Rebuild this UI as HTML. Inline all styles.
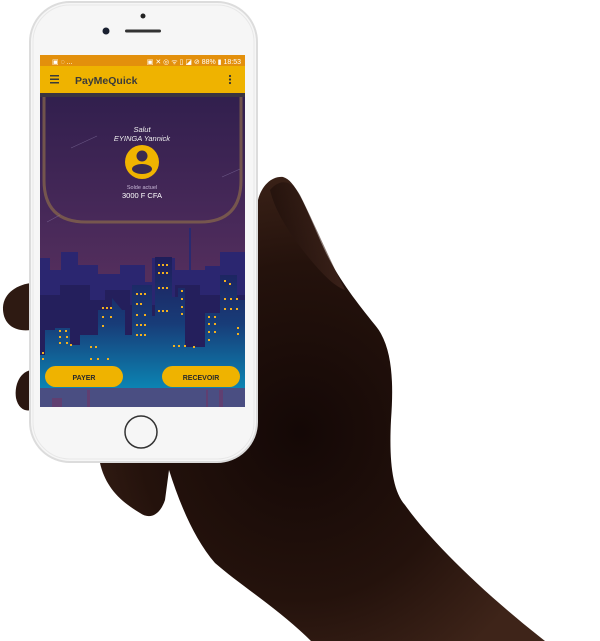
<!DOCTYPE html>
<html><head><meta charset="utf-8"><style>
html,body{margin:0;padding:0;background:#fff;width:600px;height:641px;overflow:hidden}
svg{display:block}
text{font-family:"Liberation Sans",sans-serif}
</style></head><body>
<svg width="600" height="641" viewBox="0 0 600 641" xmlns="http://www.w3.org/2000/svg">
<defs>
<radialGradient id="hand" cx="0.45" cy="0.55" r="0.6">
<stop offset="0" stop-color="#140806"/><stop offset="0.6" stop-color="#24120c"/><stop offset="1" stop-color="#3e2419"/>
</radialGradient>
<linearGradient id="sky" x1="0" y1="0" x2="0" y2="1">
<stop offset="0" stop-color="#2a1c4a"/><stop offset="0.5" stop-color="#4a2a5a"/><stop offset="1" stop-color="#6e3a62"/>
</linearGradient>
<linearGradient id="front" x1="0" y1="0" x2="0" y2="1">
<stop offset="0" stop-color="#1f1d5a"/><stop offset="0.5" stop-color="#183c78"/><stop offset="1" stop-color="#0b86b4"/>
</linearGradient>
<linearGradient id="thumbhi" x1="0" y1="0" x2="1" y2="0">
<stop offset="0" stop-color="#1a0c08"/><stop offset="1" stop-color="#4a2c22"/>
</linearGradient>
</defs>
<!-- hand -->
<path fill="url(#hand)" d="M258 200 C262 185 272 176 283 177 C295 180 305 205 320 240 C335 275 355 300 375 325 C392 345 394 380 391 420 C389 460 392 490 405 505 C430 540 480 590 545 641 L311 641 C280 610 240 585 215 563 C195 540 180 505 169 470 L165 500 C160 515 150 520 140 513 C118 500 105 485 100 463 Z"/>
<path fill="url(#thumbhi)" opacity="0.6" d="M270 190 C280 178 292 180 300 195 C315 225 330 260 345 290 C330 285 310 260 295 240 C285 225 275 210 270 190Z"/>
<path fill="#2e1a12" d="M31 283 C15 285 2 295 3 310 C4 325 15 332 31 330 Z"/>
<path fill="#2a1610" d="M31 370 C20 372 14 385 16 398 C18 408 25 412 31 410 Z"/>
<!-- phone -->
<rect x="30" y="2" width="227" height="460" rx="40" fill="#f6f6f6" stroke="#dcdcdc" stroke-width="2"/>
<rect x="33" y="5" width="221" height="454" rx="37" fill="none" stroke="#e8e8e8" stroke-width="1"/>
<circle cx="143" cy="16" r="2.5" fill="#222"/>
<circle cx="106" cy="31" r="3.5" fill="#1a2030"/>
<rect x="125" y="29.5" width="36" height="3" rx="1.5" fill="#333"/>
<circle cx="141" cy="432" r="16" fill="none" stroke="#333" stroke-width="1.5"/>
<!-- screen -->
<rect x="40" y="55" width="205" height="352" fill="url(#sky)"/>
<rect x="40" y="55" width="205" height="11" fill="#e3900c"/>
<text x="52" y="64" font-size="7" fill="#fff">▣ ◌ ...</text>
<text x="241" y="64" font-size="7" fill="#fff" text-anchor="end">▣ ✕ ◎ ᯤ ▯ ◪ ⊘ 88% ▮ 18:53</text>
<rect x="40" y="66" width="205" height="27" fill="#efb300"/>
<rect x="50" y="75" width="9" height="1.5" fill="#3a3a3a"/><rect x="50" y="78.5" width="9" height="1.5" fill="#3a3a3a"/><rect x="50" y="82" width="9" height="1.5" fill="#3a3a3a"/>
<text x="75" y="84" font-size="10.5" font-weight="bold" fill="#3a3a3a">PayMeQuick</text>
<circle cx="230" cy="76" r="1.1" fill="#333"/><circle cx="230" cy="79.5" r="1.1" fill="#333"/><circle cx="230" cy="83" r="1.1" fill="#333"/>
<rect x="40" y="93" width="205" height="4" fill="#3a3440"/>
<!-- card outline -->
<path d="M44 97 L44 180 Q44 222 86 222 L200 222 Q241 222 241 180 L241 97" fill="none" stroke="#8a6a4a" stroke-width="3" opacity="0.7"/>
<g stroke="#8a7aa8" stroke-width="0.6" opacity="0.6"><line x1="71" y1="148" x2="97" y2="136"/><line x1="222" y1="177" x2="240" y2="169"/><line x1="47" y1="222" x2="60" y2="215"/></g>
<text x="142" y="132" font-size="7.5" font-style="italic" fill="#eee" text-anchor="middle">Salut</text>
<text x="142" y="141" font-size="7.5" font-style="italic" fill="#eee" text-anchor="middle">EYINGA Yannick</text>
<circle cx="142" cy="162" r="17" fill="#f0b400"/>
<circle cx="142" cy="156" r="5.5" fill="#3a2a50"/>
<ellipse cx="142" cy="169" rx="10" ry="5" fill="#3a2a50"/>
<text x="142" y="189" font-size="5.5" fill="#c9b8d8" text-anchor="middle">Solde actuel</text>
<text x="142" y="198" font-size="7.5" fill="#fff" text-anchor="middle">3000 F CFA</text>
<rect x="189" y="228" width="2" height="60" fill="#2a2a70"/>
<!-- back buildings -->
<path fill="#2b2670" d="M40 258 L50 258 L50 270 L61 270 L61 252 L78 252 L78 265 L98 265 L98 274 L120 274 L120 265 L145 265 L145 282 L152 282 L152 258 L175 258 L175 270 L205 270 L205 266 L220 266 L220 252 L245 252 L245 400 L40 400Z"/>
<path fill="#241f5c" d="M40 295 L60 295 L60 285 L90 285 L90 300 L105 300 L105 290 L130 290 L130 305 L175 305 L175 285 L200 285 L200 295 L245 295 L245 400 L40 400Z"/>
<!-- front buildings -->
<path fill="url(#front)" d="M40 355 L45 355 L45 330 L55 330 L55 328 L70 328 L70 345 L80 345 L80 335 L98 335 L98 310 L112 310 L112 298 L122 310 L125 310 L125 335 L132 335 L132 285 L152 285 L152 316 L155 316 L155 257 L172 257 L172 297 L178 297 L178 288 L185 288 L185 347 L205 347 L205 313 L220 313 L220 275 L237 275 L237 300 L245 300 L245 390 L40 390Z"/>
<g fill="#f2b01e">
<rect x="158" y="264" width="2" height="2"/><rect x="162" y="264" width="2" height="2"/><rect x="166" y="264" width="2" height="2"/>
<rect x="158" y="272" width="2" height="2"/><rect x="162" y="272" width="2" height="2"/><rect x="166" y="272" width="2" height="2"/>
<rect x="158" y="287" width="2" height="2"/><rect x="162" y="287" width="2" height="2"/><rect x="166" y="287" width="2" height="2"/>
<rect x="158" y="310" width="2" height="2"/><rect x="162" y="310" width="2" height="2"/><rect x="166" y="310" width="2" height="2"/>
<rect x="136" y="293" width="2" height="2"/><rect x="140" y="293" width="2" height="2"/><rect x="144" y="293" width="2" height="2"/>
<rect x="136" y="303" width="2" height="2"/><rect x="140" y="303" width="2" height="2"/>
<rect x="136" y="314" width="2" height="2"/><rect x="144" y="314" width="2" height="2"/>
<rect x="136" y="324" width="2" height="2"/><rect x="140" y="324" width="2" height="2"/><rect x="144" y="324" width="2" height="2"/>
<rect x="136" y="334" width="2" height="2"/><rect x="140" y="334" width="2" height="2"/><rect x="144" y="334" width="2" height="2"/>
<rect x="102" y="307" width="2" height="2"/><rect x="106" y="307" width="2" height="2"/><rect x="110" y="307" width="2" height="2"/>
<rect x="102" y="316" width="2" height="2"/><rect x="110" y="316" width="2" height="2"/><rect x="102" y="325" width="2" height="2"/>
<rect x="181" y="290" width="2" height="2"/><rect x="181" y="298" width="2" height="2"/><rect x="181" y="306" width="2" height="2"/><rect x="181" y="313" width="2" height="2"/>
<rect x="224" y="280" width="2" height="2"/><rect x="229" y="283" width="2" height="2"/><rect x="224" y="298" width="2" height="2"/><rect x="230" y="298" width="2" height="2"/><rect x="236" y="298" width="2" height="2"/>
<rect x="224" y="308" width="2" height="2"/><rect x="230" y="308" width="2" height="2"/><rect x="236" y="308" width="2" height="2"/>
<rect x="237" y="327" width="2" height="2"/><rect x="237" y="333" width="2" height="2"/>
<rect x="208" y="316" width="2" height="2"/><rect x="214" y="316" width="2" height="2"/><rect x="208" y="323" width="2" height="2"/><rect x="214" y="323" width="2" height="2"/><rect x="208" y="331" width="2" height="2"/><rect x="214" y="331" width="2" height="2"/><rect x="208" y="339" width="2" height="2"/>
<rect x="59" y="330" width="2" height="2"/><rect x="65" y="330" width="2" height="2"/><rect x="59" y="336" width="2" height="2"/><rect x="66" y="336" width="2" height="2"/><rect x="59" y="342" width="2" height="2"/><rect x="66" y="342" width="2" height="2"/><rect x="70" y="344" width="2" height="2"/>
<rect x="90" y="346" width="2" height="2"/><rect x="95" y="346" width="2" height="2"/><rect x="90" y="358" width="2" height="2"/><rect x="97" y="358" width="2" height="2"/><rect x="107" y="358" width="2" height="2"/>
<rect x="173" y="345" width="2" height="2"/><rect x="178" y="345" width="2" height="2"/><rect x="184" y="345" width="2" height="2"/><rect x="193" y="346" width="2" height="2"/>
<rect x="42" y="352" width="2" height="2"/><rect x="42" y="358" width="2" height="2"/>
</g>
<rect x="40" y="388" width="205" height="19" fill="#4a4e82"/>
<g fill="#6a3a6a" opacity="0.7"><rect x="52" y="398" width="10" height="9"/><rect x="87" y="390" width="3" height="17"/><rect x="206" y="390" width="2" height="17"/><rect x="219" y="390" width="4" height="17"/></g>
<rect x="45" y="366" width="78" height="21" rx="10.5" fill="#efb300"/>
<rect x="162" y="366" width="78" height="21" rx="10.5" fill="#efb300"/>
<text x="84" y="380" font-size="7" font-weight="bold" fill="#2a2a2a" text-anchor="middle">PAYER</text>
<text x="201" y="380" font-size="7" font-weight="bold" fill="#2a2a2a" text-anchor="middle">RECEVOIR</text>
</svg>
</body></html>
